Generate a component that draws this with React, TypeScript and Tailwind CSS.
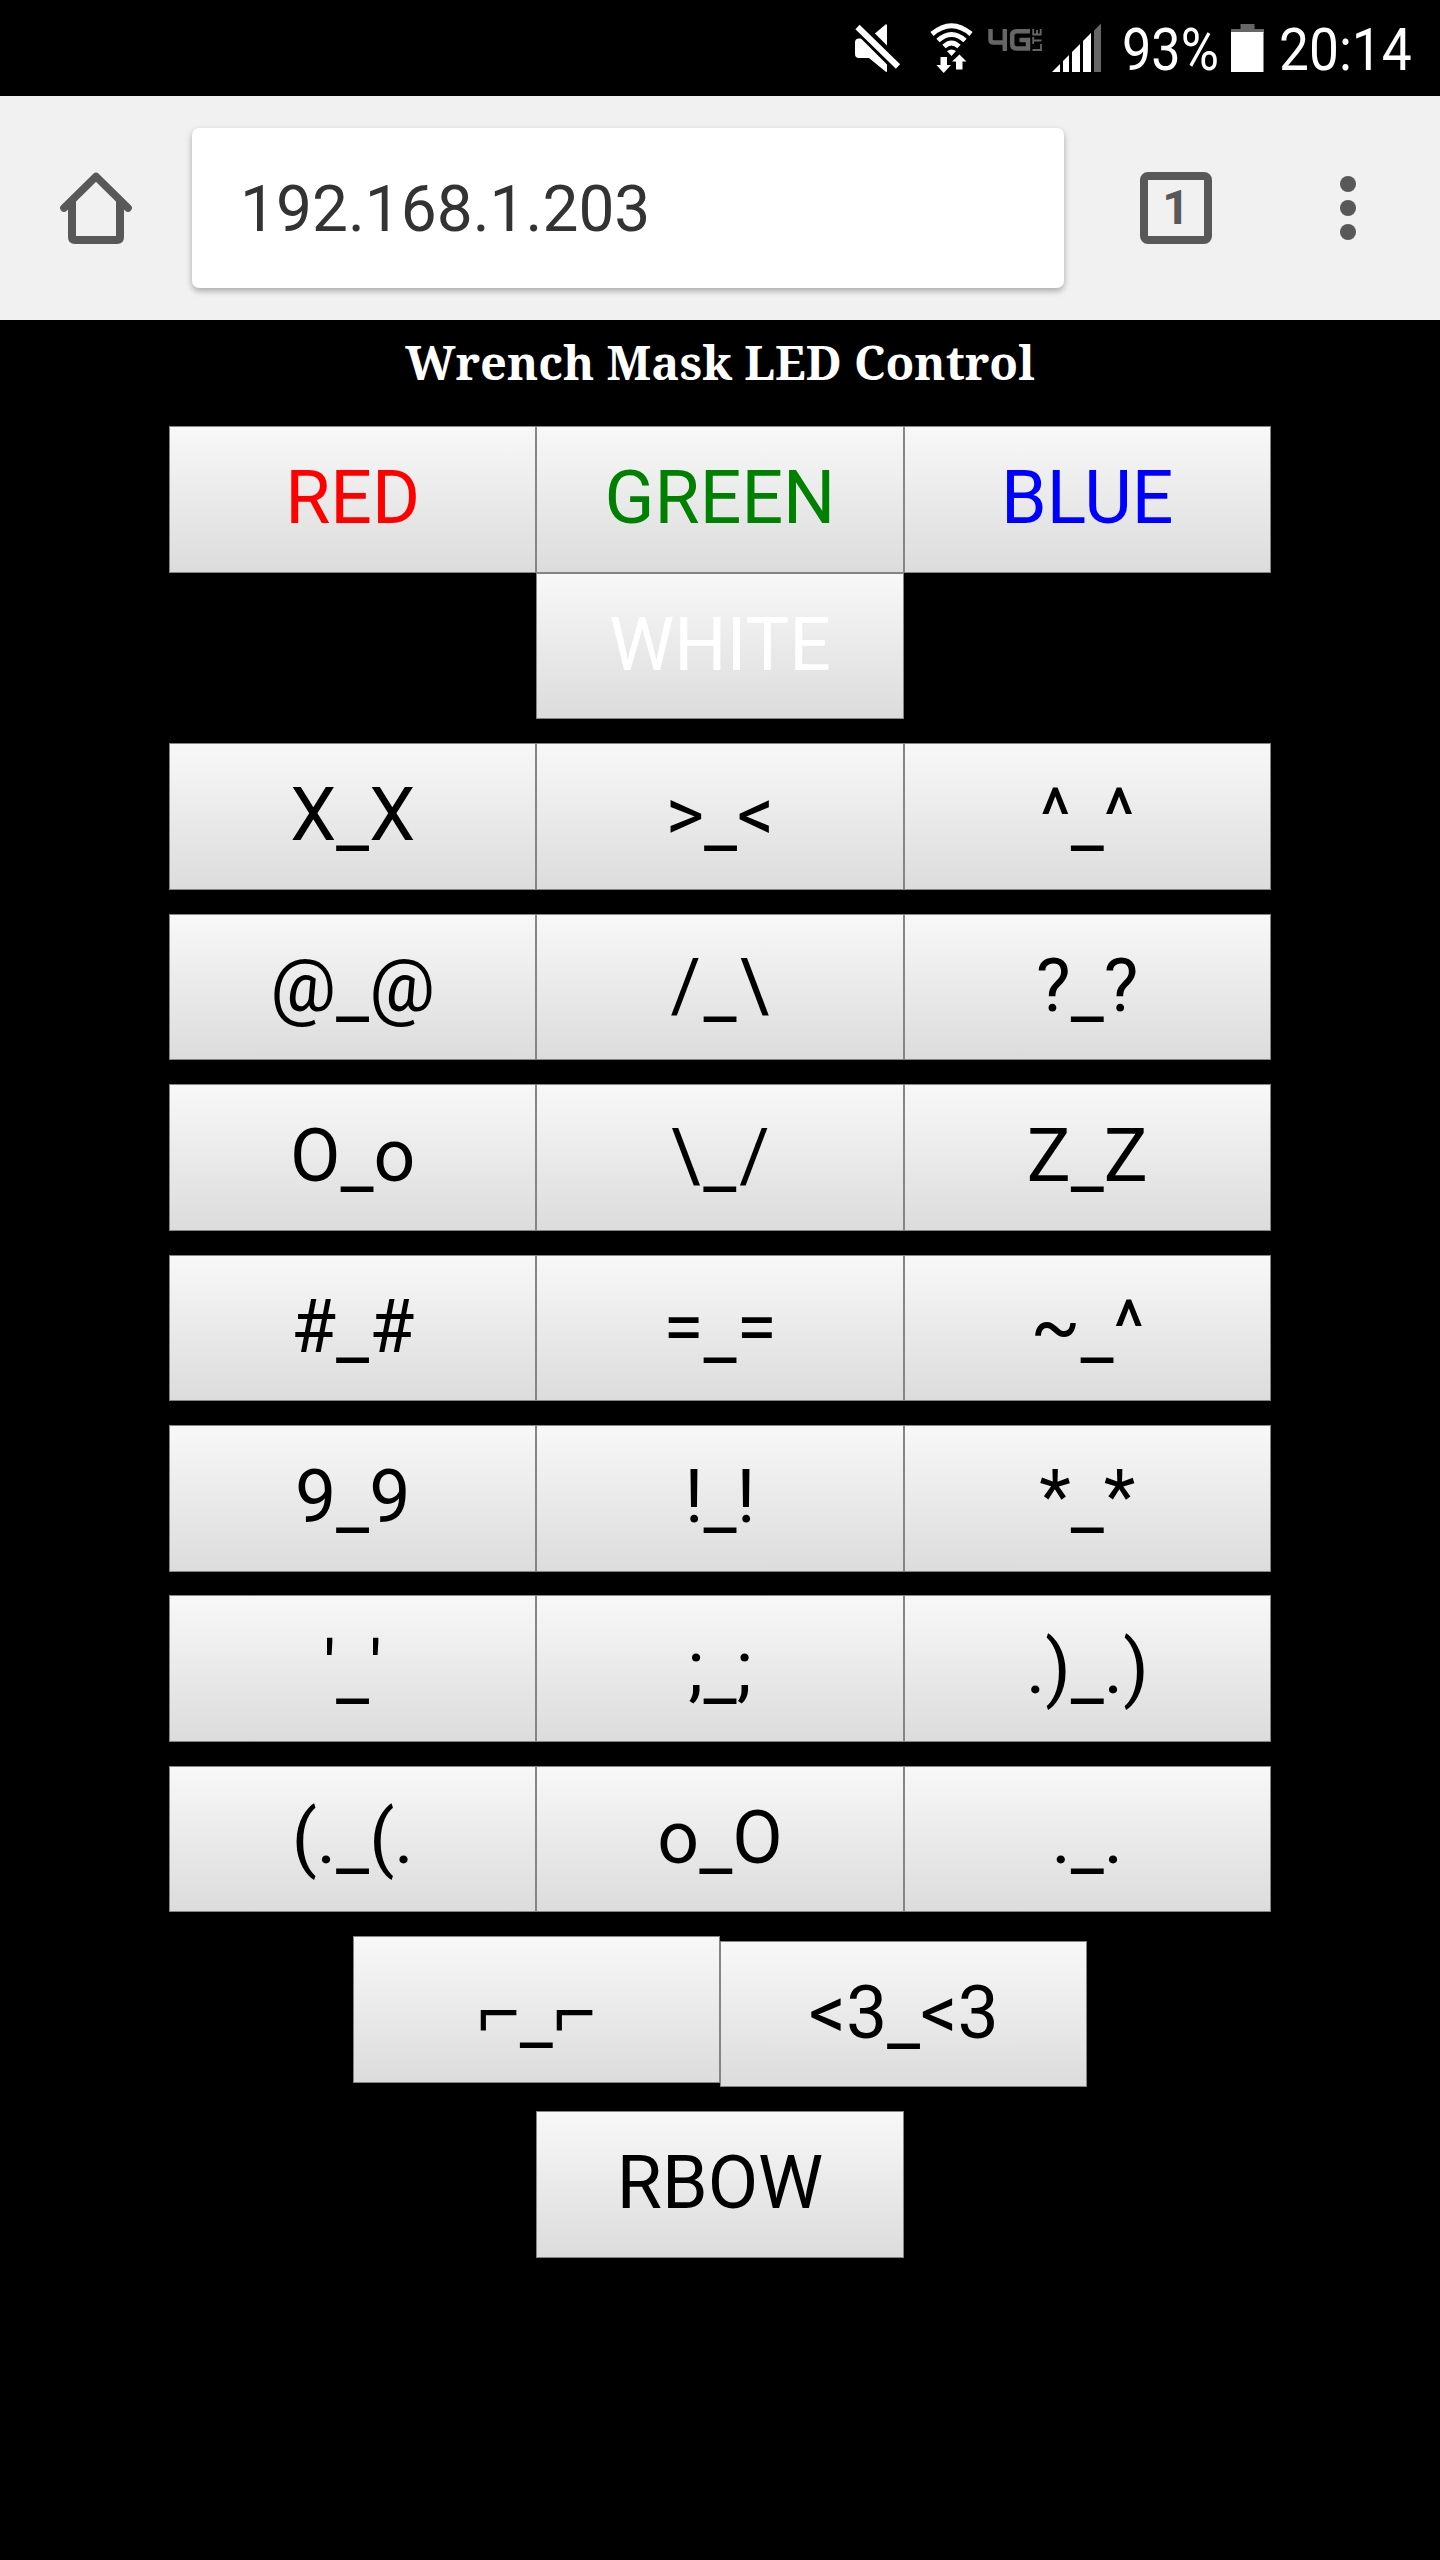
import React from "react";

const button =
  "flex h-[146.67px] w-[367.33px] items-center justify-center border border-[#858585] bg-linear-to-b from-[#f8f8f8] to-[#dcdcdc] pb-px text-[73.33px] leading-none";

function Key({ label, color = "text-black", extra = "" }: { label: string; color?: string; extra?: string }) {
  const [left, right] = label.split("_");
  return (
    <button className={`${button} ${color} ${extra}`}>
      {right === undefined ? (
        label
      ) : (
        <span>
          {left}
          <span className="inline-block translate-y-[5px]">_</span>
          {right}
        </span>
      )}
    </button>
  );
}

const faces = [
  ["X_X", ">_<", "^_^"],
  ["@_@", "/_\\", "?_?"],
  ["O_o", "\\_/", "Z_Z"],
  ["#_#", "=_=", "~_^"],
  ["9_9", "!_!", "*_*"],
  ["'_'", ";_;", ".)_.)"],
  ["(._(.", "o_O", "._."],
];

function StatusBar() {
  return (
    <div className="flex h-24 items-start bg-black text-white">
      <svg className="ml-[850px] mt-5 shrink-0" width="54" height="56" viewBox="850 20 54 56">
        <path fill="#fff" d="M855 42.500q0-4 4-4h10L885.500 24.500q1.500-.7 1.500 1V72l-1.500-.5L869 58h-10q-4 0-4-4z" />
        <path stroke="#000" strokeWidth="13.500" d="M856 24L902 70" />
        <path stroke="#fff" strokeWidth="6" d="M857.500 27L898 66.500" />
      </svg>
      <svg className="ml-[24px] mt-5 shrink-0" width="48" height="56" viewBox="928 20 48 56">
        <g fill="none" stroke="#fff" strokeWidth="5">
          <path d="M932 34Q951.500 17.500 971 34" />
          <path d="M938 40.500Q951.500 28.500 965 40.500" />
          <path d="M944 46.500Q951.500 39.500 959 46.500" />
        </g>
        <path fill="#fff" d="M947 51q4.500-3 9 0l-4.500 5z" />
        <path fill="#fff" d="M940.500 57h6.500v8h4L943.700 73 936.500 65h4zM959.500 54.500L966.500 61.500h-4V69.500h-6.500v-8h-4z" />
      </svg>
      <svg className="ml-[10px] mt-5 shrink-0" width="58" height="36" viewBox="986 20 58 36">
        <g fill="none" stroke="#666" strokeWidth="4.500">
          <path d="M990.500 29v10.500q0 3 3 3h13.500M1004.800 29v22" />
          <path d="M1030 31.200h-13.500q-4.300 0-4.300 4.300v8.500q0 4.500 4.300 4.500h11.500v-8.500h-8.500" />
        </g>
        <path fill="none" stroke="#666" strokeWidth="1.800" d="M1032.500 50h8.500M1041 51v-7M1032.500 40.500h9M1033.200 44v-7M1032.500 34.500h9M1033.200 35v-6M1040.700 35v-6M1037 35v-5" />
      </svg>
      <svg className="ml-[6px] mt-5 shrink-0" width="54" height="54" viewBox="1050 20 54 54">
        <path fill="#fff" d="M1052 72l8-8v8zM1063 72V61l6-6v17zM1072 72V52l8-8v28zM1083 72V41l8-8v39z" />
        <path fill="#666" d="M1094 72V30.500l7-7V72z" />
      </svg>
      <span className="ml-[18px] mt-[19px] text-[60px] leading-[62px] whitespace-nowrap"><span className="inline-block w-[97px]"><span className="inline-block origin-left scale-x-[.87]">93%</span></span></span>
      <svg className="ml-[12px] mt-6 shrink-0" width="33" height="49" viewBox="0 0 33 49">
        <path fill="#666" d="M9.500 0h14v5H33v4H0V5h9.500z" />
        <path fill="#fff" d="M0 8h32.500v40H0z" />
      </svg>
      <span className="ml-[15px] mt-[19px] inline-block origin-left scale-x-[.888] text-[60px] leading-[62px] whitespace-nowrap">20:14</span>
    </div>
  );
}

function Toolbar() {
  return (
    <div className="flex h-56 items-center bg-[#f1f1f1] text-[#333]">
      <svg className="ml-[56px] shrink-0" width="80" height="112" viewBox="56 152 80 112">
        <path
          fill="none"
          stroke="#585858"
          strokeWidth="7.600"
          strokeLinecap="round"
          strokeLinejoin="round"
          d="M64 208l32-31.500l32 31.500"
        />
        <path fill="#585858" d="M68 200l8-8v44h40v-44l8 8v37q0 7-7 7H75q-7 0-7-7z" />
      </svg>
      <div className="ml-[56px] flex h-40 w-[872px] items-center rounded-[7px] bg-white pt-[3px] pl-[48px] text-[64px] shadow-[0_3px_6px_rgba(0,0,0,0.3)]">
        192.168.1.203
      </div>
      <div className="ml-[76px] flex h-[72px] w-[72px] items-center justify-center rounded-[8px] border-8 border-[#585858] text-[48px] leading-none font-bold text-[#585858]">
        1
      </div>
      <div className="ml-[128px] flex flex-col gap-2">
        <i className="h-4 w-4 rounded-full bg-[#585858]" />
        <i className="h-4 w-4 rounded-full bg-[#585858]" />
        <i className="h-4 w-4 rounded-full bg-[#585858]" />
      </div>
    </div>
  );
}

export default function App() {
  return (
    <div className="h-[2560px] w-[1440px] overflow-hidden bg-black font-[Roboto,sans-serif]">
      <StatusBar />
      <Toolbar />
      <h1 className="flex h-[106px] justify-center pt-[10px] font-['Noto_Serif','DejaVu_Serif_Condensed','DejaVu_Serif',serif] text-[47px] leading-[65px] font-bold text-white">
        Wrench Mask LED Control
      </h1>
      <div className="flex justify-center">
        <Key label="RED" color="text-[#ff0000]" />
        <Key label="GREEN" color="text-[#008000]" />
        <Key label="BLUE" color="text-[#0000ff]" />
      </div>
      <div className="flex justify-center">
        <Key label="WHITE" color="text-white" />
      </div>
      <div className="flex flex-col gap-[23.75px] pt-6">
        {faces.map((row) => (
          <div className="flex justify-center" key={row[0]}>
            {row.map((f) => (
              <Key label={f} key={f} extra={f.includes("/") ? "tracking-[2.7px] pl-[2.7px]" : ""} />
            ))}
          </div>
        ))}
        <div className="flex items-start justify-center">
          <Key label="⌐_⌐" extra="pt-[8px]" />
          <Key label="<3_<3" extra="mt-[4.5px]" />
        </div>
        <div className="flex justify-center">
          <Key label="RBOW" />
        </div>
      </div>
    </div>
  );
}
